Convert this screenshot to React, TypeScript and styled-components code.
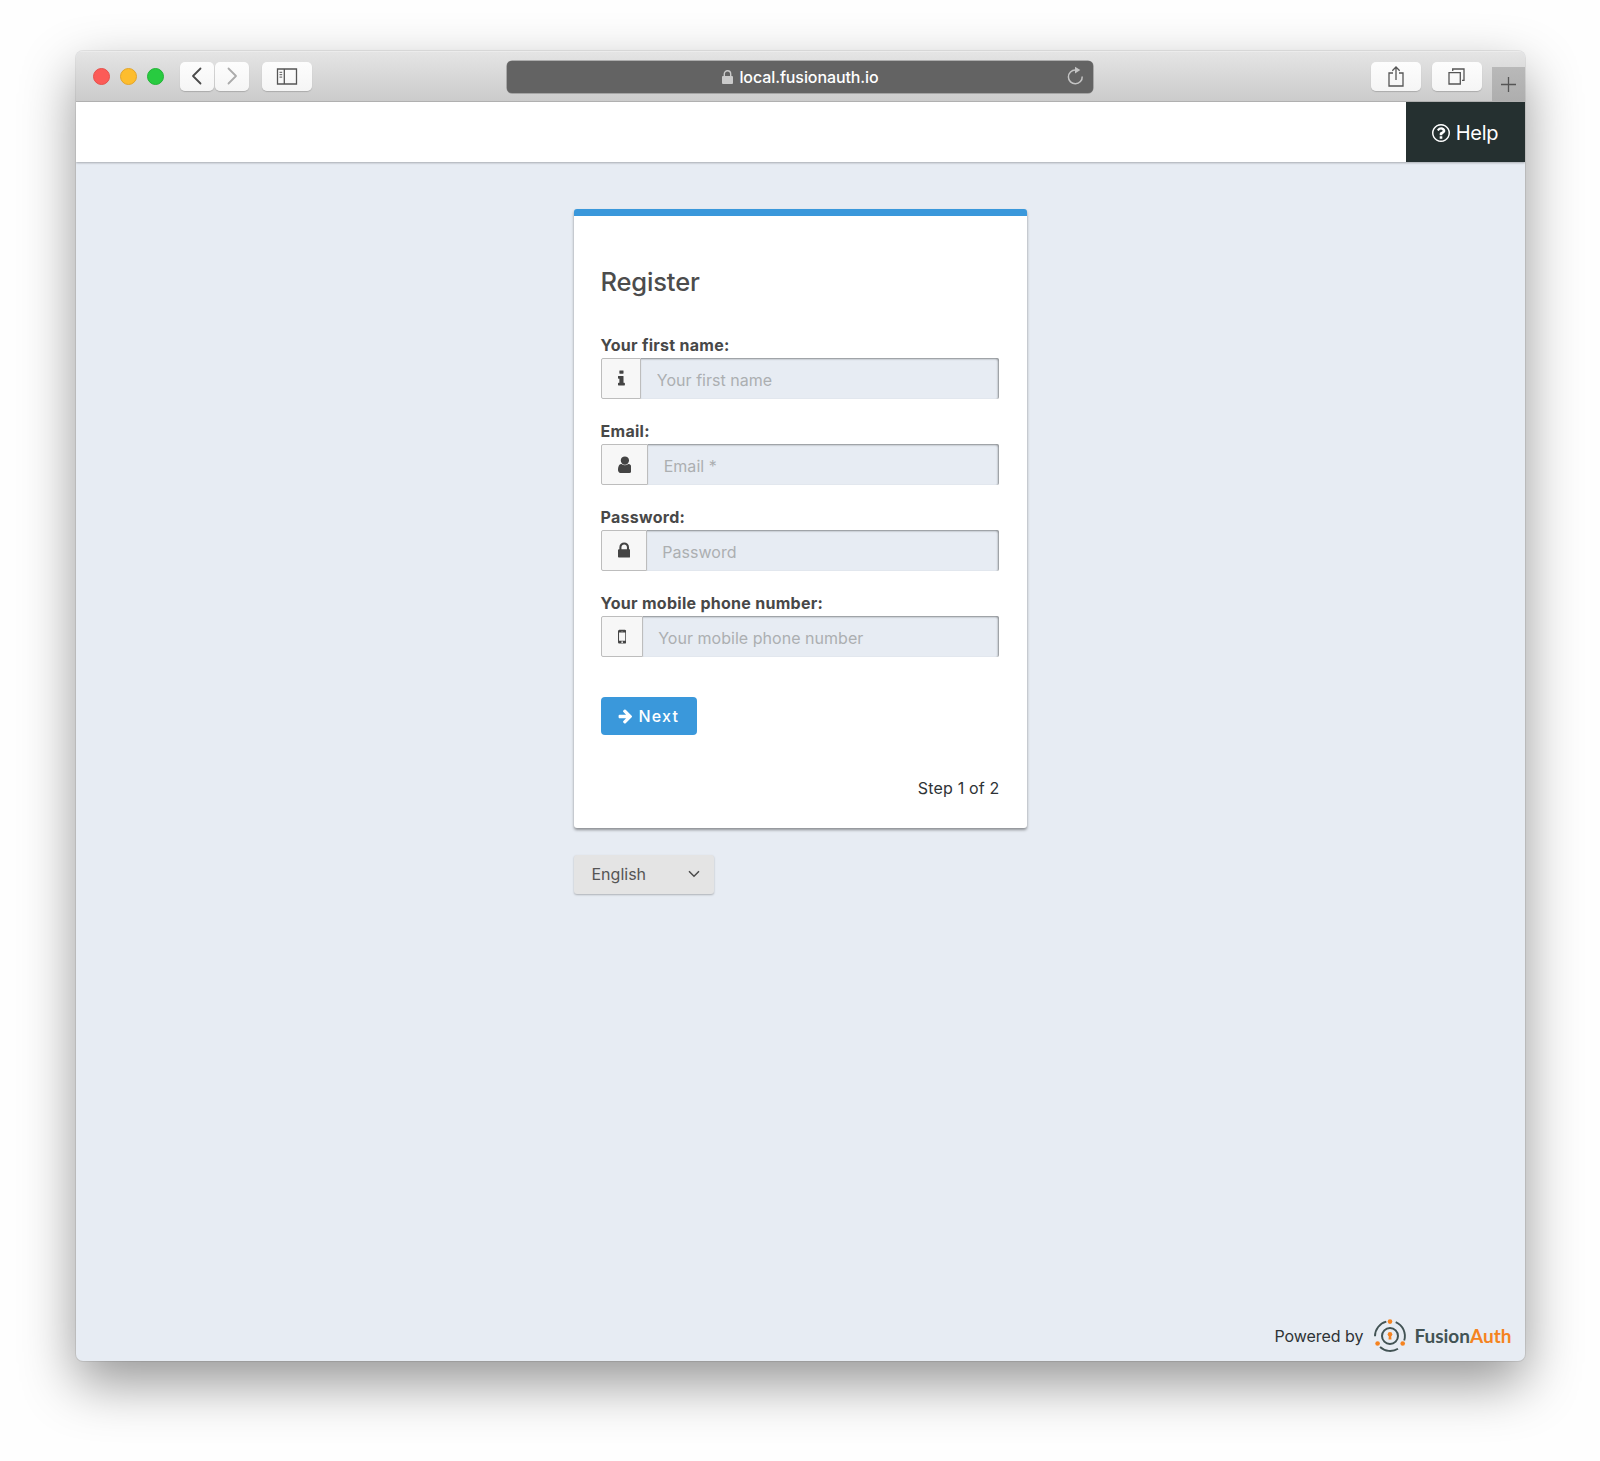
import React from 'react';
import styled, { createGlobalStyle } from 'styled-components';

const GlobalStyle = createGlobalStyle`
  * { box-sizing: border-box; }
  html, body { margin: 0; background: #fefefe; }
  body { font-family: Inter, "Liberation Sans", sans-serif; color: #2e3336; }
  button, input, select { font-family: inherit; }
`;

const Desktop = styled.div`
  display: flex;
  justify-content: center;
  height: 1461px;
  padding-top: 51px;
  overflow: hidden;
`;

const Window = styled.div`
  display: flex;
  flex-direction: column;
  width: 1449px;
  height: 1310px;
  border-radius: 7px;
  overflow: hidden;
  background: #e7ecf3;
  box-shadow: 0 0 0 1px rgba(0, 0, 0, 0.08), 0 22px 54px rgba(0, 0, 0, 0.41);
`;

const TitleBar = styled.div`
  display: flex;
  align-items: center;
  justify-content: space-between;
  height: 51px;
  flex: none;
  background: linear-gradient(#e5e5e5, #cbcbcb);
  border-bottom: 1px solid #b4b4b4;
  box-shadow: inset 0 1px 0 #ececec;
`;

const Controls = styled.div`
  display: flex;
  align-items: center;
  width: 431px;
  padding-left: 17px;
`;

const Light = styled.i<{ $fill: string; $edge: string }>`
  width: 17px;
  height: 17px;
  margin-right: 10px;
  border-radius: 50%;
  background: ${(p) => p.$fill};
  border: 1px solid ${(p) => p.$edge};
`;

const ToolButton = styled.button<{ $width: number; $left?: number }>`
  display: flex;
  align-items: center;
  justify-content: center;
  width: ${(p) => p.$width}px;
  height: 29px;
  margin: 0 0 0 ${(p) => p.$left ?? 0}px;
  padding: 0;
  border: 0;
  border-radius: 5px;
  background: linear-gradient(#fdfdfd, #f5f5f5);
  box-shadow: 0 1px 1px rgba(0, 0, 0, 0.18);
`;

const AddressBar = styled.div`
  display: grid;
  grid-template-columns: 1fr auto 1fr;
  align-items: center;
  width: 586px;
  height: 32px;
  margin-top: 1px;
  padding-right: 9px;
  border-radius: 5px;
  background: #636363;
  box-shadow: 0 0 0 0.5px #7b7b7b;
`;

const Address = styled.div`
  grid-column: 2;
  display: flex;
  align-items: center;
  gap: 6px;
  padding: 1px 0 0 10px;
  color: #fff;
  font-size: 16px;
  font-weight: 500;
  line-height: 20px;
  letter-spacing: -0.1px;
`;

const Reload = styled.div`
  display: flex;
  justify-content: flex-end;
`;

const WindowTools = styled.div`
  display: flex;
  justify-content: flex-end;
  align-items: center;
  align-self: stretch;
  width: 431px;
`;

const NewTab = styled.div`
  display: flex;
  align-items: center;
  justify-content: center;
  align-self: flex-end;
  width: 33px;
  height: 34px;
  margin-left: 10px;
  padding-top: 1px;
  background: linear-gradient(#b9b9b9, #aeaeae);
`;

const SiteHeader = styled.header`
  display: flex;
  justify-content: flex-end;
  flex: none;
  height: 60px;
  background: #fff;
  box-shadow: 0 1px 2px rgba(0, 0, 0, 0.28);
`;

const HelpLink = styled.a`
  display: flex;
  align-items: center;
  justify-content: center;
  gap: 6px;
  width: 119px;
  padding-top: 2px;
  background: #253030;
  color: #fff;
  font-size: 20px;
  line-height: 24px;
  letter-spacing: -0.25px;
`;

const Main = styled.main`
  flex: 1;
  align-self: center;
  width: 453px;
  padding-top: 47px;
`;

const Card = styled.section`
  height: 619px;
  padding: 50px 27px 0 27px;
  border-top: 7px solid #3a98db;
  border-radius: 3px;
  background: #fff;
  box-shadow: 0 2px 3px rgba(0, 0, 0, 0.4);
`;

const Heading = styled.h1`
  margin: 0 0 37px;
  color: #4c4c4c;
  font-size: 25.5px;
  font-weight: 500;
  line-height: 32px;
  letter-spacing: -0.15px;
`;

const Field = styled.div`
  margin-bottom: 22px;
`;

const Label = styled.label`
  display: block;
  margin-bottom: 3px;
  color: #484848;
  font-size: 16px;
  font-weight: 700;
  line-height: 20px;
  letter-spacing: 0.28px;
`;

const InputGroup = styled.div`
  display: flex;
  width: 398px;
  height: 41px;
`;

const Addon = styled.span`
  display: flex;
  align-items: center;
  flex: none;
  padding: 0 15.7px 0 16.2px;
  border: 1px solid #bdbdbd;
  border-radius: 2px 0 0 2px;
  background: #f7f7f7;
  color: #444;
`;

const Input = styled.input`
  flex: 1;
  min-width: 0;
  padding: 3px 0 0 15.5px;
  border: 0;
  border-radius: 0 2px 2px 0;
  background: #e7ecf3;
  box-shadow: inset -1px 1px 2px rgba(0, 0, 0, 0.42);
  font-size: 16px;
  letter-spacing: 0.03px;
  &::placeholder { color: #acafb1; opacity: 1; }
`;

const NextButton = styled.button`
  display: flex;
  align-items: center;
  gap: 7px;
  width: 96px;
  height: 38px;
  margin: 40px 0 43px;
  padding: 0 0 0 17px;
  border: 0;
  border-radius: 4px;
  background: #3a98db;
  color: #fff;
  font-size: 16px;
  font-weight: 500;
  letter-spacing: 1.2px;
`;

const Step = styled.p`
  margin: 0;
  text-align: right;
  font-size: 16px;
  line-height: 20px;
  letter-spacing: 0.18px;
`;

const LocaleSelect = styled.button`
  display: flex;
  align-items: center;
  justify-content: space-between;
  width: 140px;
  height: 39px;
  margin-top: 27px;
  padding: 0 14px 1px 18px;
  border: 0;
  border-radius: 3px;
  background: #e4e4e4;
  color: #555;
  font-size: 16px;
  box-shadow: 0 1px 2px rgba(0, 0, 0, 0.25);
`;

const Footer = styled.footer`
  display: flex;
  align-items: center;
  justify-content: flex-end;
  height: 34px;
  margin-bottom: 8px;
  padding-right: 13px;
  font-size: 16px;
  letter-spacing: -0.05px;
`;

const BrandMark = styled.svg`
  width: 34px;
  height: 34px;
  margin: 0 7px 0 10px;
`;

const BrandName = styled.span`
  color: #425354;
  font-family: Lato, sans-serif;
  font-size: 19px;
  font-weight: 700;
  line-height: 20px;
  letter-spacing: 0;
  padding-bottom: 1px;
  b { color: #f58320; font-weight: 700; }
`;

const glyphs = {
  info: {
    box: '576 0 640 1792',
    width: 6.9,
    d: 'M1216 1344v128q0 26-19 45t-45 19h-512q-26 0-45-19t-19-45v-128q0-26 19-45t45-19h64v-384h-64q-26 0-45-19t-19-45v-128q0-26 19-45t45-19h384q26 0 45 19t19 45v576h64q26 0 45 19t19 45zm-128-1152v192q0 26-19 45t-45 19h-256q-26 0-45-19t-19-45v-192q0-26 19-45t45-19h256q26 0 45 19t19 45z',
  },
  user: {
    box: '256 0 1280 1792',
    width: 13.8,
    d: 'M1536 1399q0 109-62.5 187t-150.5 78h-854q-88 0-150.5-78t-62.5-187q0-85 8.5-160.5t31.5-152 58.5-131 94-89 134.5-34.5q131 128 313 128t313-128q76 0 134.5 34.5t94 89 58.5 131 31.5 152 8.5 160.5zm-256-887q0 159-112.5 271.5t-271.5 112.5-271.5-112.5-112.5-271.5 112.5-271.5 271.5-112.5 271.5 112.5 112.5 271.5z',
  },
  lock: {
    box: '320 0 1152 1792',
    width: 12.4,
    d: 'M640 768h512v-192q0-106-75-181t-181-75-181 75-75 181v192zm832 96v576q0 40-28 68t-68 28h-960q-40 0-68-28t-28-68v-576q0-40 28-68t68-28h32v-192q0-184 132-316t316-132 316 132 132 316v192h32q40 0 68 28t28 68z',
  },
  mobile: {
    box: '512 0 768 1792',
    width: 8.3,
    d: 'M976 1408q0-33-23.5-56.5t-56.5-23.5-56.5 23.5-23.5 56.5 23.5 56.5 56.5 23.5 56.5-23.5 23.5-56.5zm208-160v-704q0-13-9.5-22.5t-22.5-9.5h-512q-13 0-22.5 9.5t-9.5 22.5v704q0 13 9.5 22.5t22.5 9.5h512q13 0 22.5-9.5t9.5-22.5zm-192-848q0-16-16-16h-160q-16 0-16 16t16 16h160q16 0 16-16zm288-16v1024q0 52-38 90t-90 38h-512q-52 0-90-38t-38-90v-1024q0-52 38-90t90-38h512q52 0 90 38t38 90z',
  },
};

type GlyphName = keyof typeof glyphs;

const fields: { label: string; placeholder: string; icon: GlyphName; type: string }[] = [
  { label: 'Your first name:', placeholder: 'Your first name', icon: 'info', type: 'text' },
  { label: 'Email:', placeholder: 'Email *', icon: 'user', type: 'text' },
  { label: 'Password:', placeholder: 'Password', icon: 'lock', type: 'password' },
  { label: 'Your mobile phone number:', placeholder: 'Your mobile phone number', icon: 'mobile', type: 'text' },
];

const Glyph = ({ name }: { name: GlyphName }) => (
  <svg width={glyphs[name].width} height={19.3} viewBox={glyphs[name].box} fill="currentColor">
    <path d={glyphs[name].d} />
  </svg>
);

export default function App() {
  return (
    <>
      <GlobalStyle />
      <Desktop>
        <Window>
          <TitleBar>
            <Controls>
              <Light $fill="#fc5b57" $edge="#e5514c" />
              <Light $fill="#fdbd2e" $edge="#e3a52a" />
              <Light $fill="#28cb40" $edge="#22b436" />
              <ToolButton $width={34} $left={6.5}>
                <svg width="12" height="18" viewBox="0 0 12 18" fill="none" stroke="#4a4a4a" strokeWidth="1.8" strokeLinecap="round" strokeLinejoin="round">
                  <path d="M9.500 1.500 2 9l7.500 7.500" />
                </svg>
              </ToolButton>
              <ToolButton $width={34} $left={1}>
                <svg width="12" height="18" viewBox="0 0 12 18" fill="none" stroke="#ababab" strokeWidth="1.8" strokeLinecap="round" strokeLinejoin="round">
                  <path d="M2.500 1.500 10 9l-7.500 7.500" />
                </svg>
              </ToolButton>
              <ToolButton $width={50} $left={13}>
                <svg width="22" height="17" viewBox="0 0 22 17" fill="none" stroke="#555" strokeWidth="1.3">
                  <path d="M1.500 1h19v15h-19zM8.300 1v15" />
                  <path d="M3.500 4.300h2.700M3.500 6.700h2.700M3.500 9.100h2.700" strokeWidth="1" />
                </svg>
              </ToolButton>
            </Controls>
            <AddressBar>
              <Address>
                <svg width="11" height="14" viewBox="0 0 11 14">
                  <rect x="0" y="6" width="11" height="8" rx="1" fill="#cacaca" />
                  <path d="M2.300 7V4a3.200 3.200 0 0 1 6.400 0v3" fill="none" stroke="#cacaca" strokeWidth="1.400" />
                </svg>
                local.fusionauth.io
              </Address>
              <Reload>
                <svg width="17" height="21" viewBox="0 0 17 21">
                  <path d="M8.500 4A6.900 6.900 0 1 0 15.200 10.500" fill="none" stroke="#c4c4c4" strokeWidth="1.500" />
                  <path d="M8 .7 13.300 4.100 8 7.500z" fill="#c4c4c4" />
                </svg>
              </Reload>
            </AddressBar>
            <WindowTools>
              <ToolButton $width={50}>
                <svg width="16" height="21" viewBox="0 0 16 21" fill="none" stroke="#555" strokeWidth="1.300">
                  <path d="M5 7H1v13h14V7h-4M8 14V1M4.300 4.700 8 1l3.700 3.700" />
                </svg>
              </ToolButton>
              <ToolButton $width={50} $left={11}>
                <svg width="17" height="17" viewBox="0 0 17 17" fill="none" stroke="#555" strokeWidth="1.300">
                  <path d="M1 4.700h11.300V16H1zM4.700 3V1H16v11.300h-2" />
                </svg>
              </ToolButton>
              <NewTab>
                <svg width="15" height="15" viewBox="0 0 15 15" stroke="#555" strokeWidth="1.300">
                  <path d="M7.500 0v15M0 7.500h15" />
                </svg>
              </NewTab>
            </WindowTools>
          </TitleBar>
          <SiteHeader>
            <HelpLink>
              <svg width="18" height="18" viewBox="0 0 1536 1536" fill="currentColor">
                <path
                  transform="translate(0 1408) scale(1 -1)"
                  d="M880 336v-160q0 -14 -9 -23t-23 -9h-160q-14 0 -23 9t-9 23v160q0 14 9 23t23 9h160q14 0 23 -9t9 -23zM1136 832q0 -50 -15 -90t-45.500 -69t-52 -44t-59.500 -36q-32 -18 -46.500 -28t-26 -24t-11.500 -29v-32q0 -14 -9 -23t-23 -9h-160q-14 0 -23 9t-9 23v68q0 35 10.500 64.500t24 47.500t39 35.500t41 25.500t44.500 21q53 25 75 43t22 49q0 42 -43.500 71.500t-95.500 29.500q-56 0 -95 -27q-29 -20 -80 -83q-9 -12 -25 -12q-11 0 -19 6l-108 82q-10 7 -12 20t5 23q122 192 349 192q129 0 238.500 -89.500t109.500 -214.500zM768 1280q-130 0 -248.500 -51t-204 -136.500t-136.500 -204t-51 -248.500t51 -248.500t136.500 -204t204 -136.500t248.500 -51t248.500 51t204 136.500t136.500 204t51 248.500t-51 248.500t-136.500 204t-204 136.500t-248.500 51zM1536 640q0 -209 -103 -385.500t-279.500 -279.500t-385.500 -103t-385.500 103t-279.500 279.500t-103 385.500t103 385.500t279.500 279.500t385.500 103t385.500 -103t279.500 -279.500t103 -385.500z"
                />
              </svg>
              Help
            </HelpLink>
          </SiteHeader>
          <Main>
            <Card>
              <Heading>Register</Heading>
              {fields.map((f) => (
                <Field key={f.label}>
                  <Label>{f.label}</Label>
                  <InputGroup>
                    <Addon><Glyph name={f.icon} /></Addon>
                    <Input type={f.type} placeholder={f.placeholder} />
                  </InputGroup>
                </Field>
              ))}
              <NextButton>
                <svg width="14" height="15" viewBox="64 182 1536 1557" fill="currentColor">
                  <path d="M1600 960q0 54-37 91l-651 651q-39 37-91 37-51 0-90-37l-75-75q-38-38-38-91t38-91l293-293h-704q-52 0-84.500-37.500t-32.500-90.500v-128q0-53 32.500-90.500t84.500-37.500h704l-293-294q-38-36-38-90t38-90l75-75q38-38 90-38 53 0 91 38l651 651q37 35 37 90z" />
                </svg>
                Next
              </NextButton>
              <Step>Step 1 of 2</Step>
            </Card>
            <LocaleSelect>
              English
              <svg width="12" height="8" viewBox="0 0 12 8" fill="none" stroke="#4a4a4a" strokeWidth="1.500">
                <path d="M1 1.300l5 5 5-5" />
              </svg>
            </LocaleSelect>
          </Main>
          <Footer>
            Powered by
            <BrandMark viewBox="0 0 34 34" fill="none" stroke="#425354" strokeWidth="1.900">
              <path d="M13.300 2.700A15 15 0 0 0 2 17.200M22.700 3.200A15 15 0 0 1 31.200 21.500M7 28A15 15 0 0 0 25 29.700" />
              <circle cx="17" cy="17" r="8" strokeWidth="2" />
              <g fill="#f58320" stroke="none">
                <circle cx="17" cy="2.600" r="2.300" />
                <circle cx="4.600" cy="24.500" r="2.300" />
                <circle cx="29.700" cy="24.500" r="2.300" />
                <circle cx="17" cy="15.300" r="2.300" />
                <path d="M16 15h2l.5 5.600h-3z" />
              </g>
            </BrandMark>
            <BrandName>Fusion<b>Auth</b></BrandName>
          </Footer>
        </Window>
      </Desktop>
    </>
  );
}
